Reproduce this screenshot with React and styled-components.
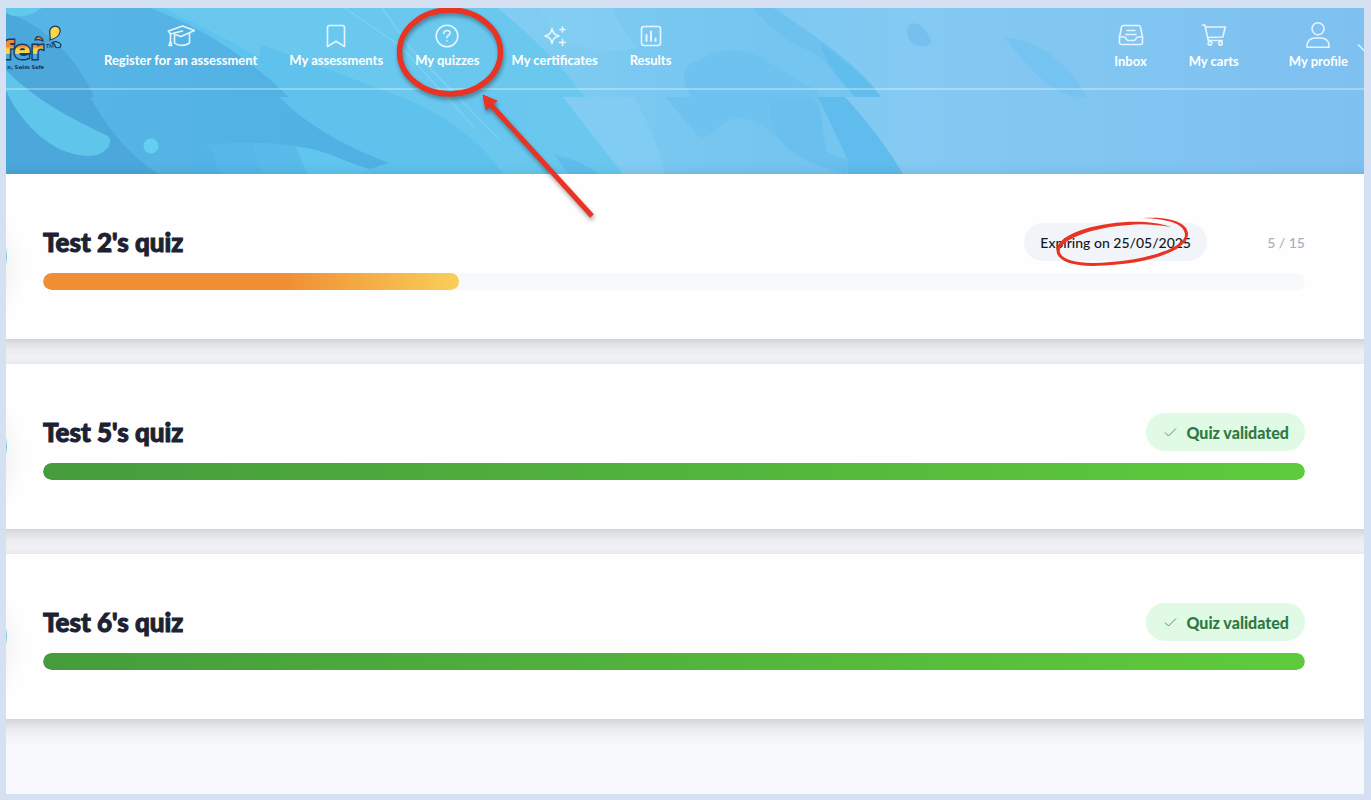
import React from "react";
import styled, { createGlobalStyle } from "styled-components";

const GlobalStyle = createGlobalStyle`
  * {
    box-sizing: border-box;
  }
  body {
    margin: 0;
    background: #d5e1f2;
    font-family: Lato, "Liberation Sans", sans-serif;
  }
`;

const Page = styled.div`
  min-height: 100vh;
  padding: 8px 7px 6px 6px;
  display: flex;
`;

const Window = styled.div`
  position: relative;
  flex: 1;
  min-width: 0;
  overflow: hidden;
  background: #f7f9fc;
`;

const Hero = styled.header`
  position: relative;
  padding-bottom: 84px;
  background: #84c9f3;
`;

const HeroArt = styled.svg`
  position: absolute;
  inset: 0;
  width: 100%;
  height: 100%;
`;

const Nav = styled.nav`
  position: relative;
  display: flex;
  align-items: flex-start;
  height: 82px;
  border-bottom: 2px solid rgba(255, 255, 255, 0.3);
`;

const Logo = styled.svg`
  width: 64px;
  height: 80px;
  margin-right: 34px;
`;

const NavLink = styled.a`
  display: flex;
  flex-direction: column;
  align-items: center;
  color: #fff;
  font-size: 13px;
  font-weight: 700;
  line-height: 18px;
  white-space: nowrap;
  text-decoration: none;
  & svg {
    width: 28px;
    height: 26px;
    fill: none;
    stroke: #e6f5fd;
    stroke-width: 1.6;
    stroke-linecap: round;
    stroke-linejoin: round;
  }
`;

const MainLinks = styled.div`
  display: flex;
  gap: 32px;
  padding-top: 15px;
  & ${NavLink} {
    gap: 2px;
  }
`;

const UserLinks = styled.div`
  display: flex;
  gap: 42px;
  padding-top: 14px;
  margin-left: auto;
  margin-right: 16px;
  & ${NavLink} {
    gap: 4px;
  }
  & ${NavLink}:last-child {
    margin-left: 8px;
  }
`;

const Chevron = styled.svg`
  position: absolute;
  right: -7px;
  top: 35px;
  width: 14px;
  height: 10px;
  fill: none;
  stroke: #e6f5fd;
  stroke-width: 1.5;
`;

const QuizList = styled.main`
  display: flex;
  flex-direction: column;
  gap: 25px;
  margin: 0 -40px;
`;

const Card = styled.section`
  position: relative;
  padding: 49px 99px 49px 77px;
  background: #fefefe;
  box-shadow: 0 8px 22px rgba(0, 0, 0, 0.12), 0 2px 10px rgba(0, 0, 0, 0.09);
`;

const Avatar = styled.span`
  position: absolute;
  left: -71px;
  top: 50%;
  width: 113px;
  height: 113px;
  margin-top: -57px;
  border: 1px solid #fff;
  border-radius: 50%;
  background: #7cc4d4;
  box-shadow: 0 10px 24px rgba(0, 0, 0, 0.08);
`;

const CardHead = styled.div`
  display: flex;
  align-items: center;
  height: 38px;
  margin-bottom: 12px;
`;

const Title = styled.h2`
  margin: 0 auto 0 0;
  color: #1b2231;
  font-size: 26px;
  font-weight: 900;
  line-height: 32px;
  -webkit-text-stroke: 1px currentColor;
`;

const Pill = styled.span`
  position: relative;
  display: flex;
  align-items: center;
  gap: 8px;
  height: 38px;
  padding: 0 16px;
  border-radius: 19px;
  font-size: ${({ $done }) => ($done ? 16 : 14)}px;
  white-space: nowrap;
  color: ${({ $done }) => ($done ? "#2f7a41" : "#14171c")};
  background: ${({ $done }) => ($done ? "#e1fae6" : "#f1f4f9")};
  font-weight: ${({ $done }) => ($done ? 900 : 500)};
`;

const Check = styled.svg`
  width: 16px;
  height: 16px;
  fill: none;
  stroke: #4f9a62;
  stroke-width: 1;
`;

const Count = styled.span`
  width: 98px;
  text-align: right;
  color: #a4b0c4;
  font-size: 14px;
  font-weight: 500;
`;

const Track = styled.div`
  height: 17px;
  border-radius: 9px;
  background: #f7f9fb;
  overflow: hidden;
`;

const Fill = styled.div`
  height: 100%;
  border-radius: 9px;
  background: ${({ $done }) =>
    $done
      ? "linear-gradient(90deg, #469c3c, #5ecb3c)"
      : "linear-gradient(90deg, #f08e35 58%, #f9cf58)"};
`;

const DateMark = styled.svg`
  position: absolute;
  right: 18px;
  top: -8px;
  width: 136px;
  height: 52px;
  fill: #e93323;
`;

const Pointer = styled.svg`
  position: absolute;
  left: 384px;
  top: -8px;
  width: 220px;
  height: 226px;
  pointer-events: none;
  filter: drop-shadow(1px 3px 2px rgba(0, 0, 0, 0.35));
`;

const icons = {
  cap: (
    <>
      <path d="M1.500 8 15.500 3l12 4.500L14 13.500 8 11.500" />
      <path d="M7.500 12v8c3.500 3.200 10.500 3.200 15 0v-9.500" />
      <path d="M15.500 8 3.500 11M1.500 8l2 3v7M3.500 18 2 22.500h2.800Z" />
    </>
  ),
  bookmark: <path d="M7.500 2.500h13a2 2 0 0 1 2 2V23.500L14 18.200 5.500 23.500V4.500a2 2 0 0 1 2-2Z" />,
  question: (
    <>
      <circle cx="14" cy="13" r="10.800" />
      <path d="M10.800 10.500c.2-4.200 6.600-3.800 6.300-.2-.2 2-3.200 2-3.200 4.400M13.900 17.800v.2" />
    </>
  ),
  sparkles: (
    <>
      <path d="M11 5.500c1 4.800 2.500 6.300 7 7.500-4.500 1.200-6 2.700-7 7.500-1-4.800-2.500-6.300-7-7.500 4.500-1.200 6-2.700 7-7.500Z" />
      <path d="M21.500 4v5M19 6.500h5M21.500 16.500v6M18.500 19.500h6" />
    </>
  ),
  chart: (
    <>
      <rect x="4.500" y="3.500" width="19" height="19" rx="2.500" />
      <path d="M9.500 12v6M14 8.500V18M18.500 15.500V18" strokeWidth="2" />
    </>
  ),
  inbox: (
    <>
      <path d="M6.500 3.500h15c1 0 1.700.6 2 1.600L25.500 15v5.500a2 2 0 0 1-2 2h-19a2 2 0 0 1-2-2V15L4.500 5.100c.3-1 1-1.600 2-1.600Z" />
      <path d="M2.500 15h5c1.500 0 1.500 3.500 3.500 3.500h6c2 0 2-3.500 3.500-3.500h5M10 8.500h8M9 12.500h10" />
    </>
  ),
  cart: (
    <>
      <path d="M2.500 3h2.300l3.500 15.500h14M5.300 5h20l-2.500 10-15.200.5" />
      <circle cx="10" cy="21.300" r="1.800" />
      <circle cx="20.500" cy="21.300" r="1.800" />
    </>
  ),
  user: (
    <>
      <circle cx="14" cy="6.800" r="6" />
      <path d="M3 25.200v-1.700c0-5 4-7.500 8-7.500h6c4 0 8 2.500 8 7.500v1.700Z" />
    </>
  ),
};

const mainLinks = [
  { icon: "cap", label: "Register for an assessment" },
  { icon: "bookmark", label: "My assessments" },
  { icon: "question", label: "My quizzes" },
  { icon: "sparkles", label: "My certificates" },
  { icon: "chart", label: "Results" },
];

const userLinks = [
  { icon: "inbox", label: "Inbox" },
  { icon: "cart", label: "My carts" },
  { icon: "user", label: "My profile" },
];

const quizzes = [
  { name: "Test 2's quiz", done: 5, total: 15, expires: "25/05/2025" },
  { name: "Test 5's quiz", done: 15, total: 15 },
  { name: "Test 6's quiz", done: 15, total: 15 },
];

function Waves() {
  return (
    <HeroArt viewBox="6 8 1358 166" preserveAspectRatio="none" aria-hidden="true">
      <defs>
        <linearGradient id="sky" x1="0" x2="1">
          <stop offset="0" stopColor="#5dc3ec" />
          <stop offset="0.3" stopColor="#60c3ef" />
          <stop offset="0.48" stopColor="#76c7f1" />
          <stop offset="0.66" stopColor="#84caf3" />
          <stop offset="1" stopColor="#7ec0f0" />
        </linearGradient>
        <linearGradient id="centre" gradientUnits="userSpaceOnUse" x1="497" y1="0" x2="760" y2="0">
          <stop offset="0.1" stopColor="#80ccf2" />
          <stop offset="1" stopColor="#74c5f0" />
        </linearGradient>
        <linearGradient id="deep" gradientUnits="userSpaceOnUse" x1="6" y1="0" x2="389" y2="0">
          <stop offset="0.2" stopColor="#56b5e5" />
          <stop offset="1" stopColor="#50b0e3" />
        </linearGradient>
      </defs>
      <rect x="6" y="8" width="1358" height="166" fill="url(#sky)" />
      {/* right leaf */}
      <path d="M410 8H773C825 42 863 70 881 97H845Q880 135 903 174H410Z" fill="url(#centre)" />
      <path d="M753 8H773C825 42 863 70 881 97H855C838 77 822 56 808 50C785 42 770 26 753 8Z" fill="#6cc1ef" />
      <path d="M820 43Q862 72 881 97H855C838 77 830 70 820 43Z" fill="#60bdec" />
      <path d="M818 97H845Q880 135 903 174H848V160Z" fill="#60bcec" />
      <path d="M691 97C678 77 685 62 700 60C722 45 752 48 770 63C793 78 805 85 818 90V97L827 152L848 160V174C815 166 797 160 782 144C765 120 735 110 720 126C705 142 699 138 695 132L665 97Z" fill="#6dc2ef" />
      <path d="M768 97H812C825 120 822 140 827 152L848 162L845 174C780 153 772 138 768 97Z" fill="#60baeb" opacity="0.35" />
      {/* centre leaf */}
      <path d="M163 8H497Q548 48 585 97H563L623 174H370Q400 120 163 8Z" fill="#6ac8ef" />
      <path d="M538 8H612C622 32 634 42 638 47C620 53 585 55 556 36Z" fill="#86cff4" opacity="0.6" />
      <path d="M563 97H634Q656 135 665 174H623Z" fill="#84cdf4" opacity="0.7" />
      <path d="M163 8Q290 55 402 97Q470 125 503 174H260V8Z" fill="#5ec2ed" />
      <path d="M163 8H345Q370 60 402 97Q290 55 163 8Z" fill="#6ac8ef" />
      <path d="M523 97C536 118 530 140 514 145C490 142 470 125 450 97Z" fill="#62c2ed" opacity="0.3" />
      <path d="M555 155Q582 160 598 174H568Z" fill="#58b8e9" opacity="0.6" />
      <path d="M345 8L400 46L475 128M382 8L410 48L500 140" fill="none" stroke="#9addf7" strokeWidth="1.500" opacity="0.4" />
      {/* left leaf */}
      <path d="M6 8H150Q226 36 289 97H279C310 128 350 148 389 163L370 169C345 163 325 148 285 145L252 143V174H6Z" fill="url(#deep)" />
      <path d="M252 143Q280 143 297 147L308 174H220L213 154Q210 148 204 145Q228 142 252 143Z" fill="#56b7e8" />
      <path d="M252 143Q280 143 297 147L308 174H262Z" fill="#59bbea" />
      <path d="M296 147C326 149 345 163 370 169L362 174H307Z" fill="#60c5ef" />
      <path d="M6 11C50 30 78 60 94 97H90Q118 148 158 174H6Z" fill="#4ca7da" />
      <path d="M6 8H42Q22 22 6 13Z" fill="#60c9ec" />
      <path d="M6 70C40 105 84 124 108 136C114 142 107 156 88 156C58 155 30 134 10 99L6 90Z" fill="#5fc5eb" />
      <circle cx="151" cy="146" r="7.500" fill="#64d0f1" />
      {/* loose drops */}
      <path d="M908 28C914 15 929 32 931 41C930 49 915 48 909 39Q906 32 908 28Z" fill="#76c0ef" />
      <path d="M1005 38C1042 40 1070 66 1086 97C1057 99 1033 74 1005 38Z" fill="#74c3f0" />
    </HeroArt>
  );
}

function Brand() {
  return (
    <Logo viewBox="6 8 64 80">
      <defs>
        <linearGradient id="sunset" x1="0" x2="0" y1="0" y2="1">
          <stop offset="0.36" stopColor="#ef8a33" />
          <stop offset="0.46" stopColor="#f9d648" />
          <stop offset="0.6" stopColor="#f9d648" />
          <stop offset="0.62" stopColor="#48a5dc" />
        </linearGradient>
      </defs>
      <text
        x="43"
        y="59"
        textAnchor="end"
        fontFamily="DejaVu Sans, sans-serif"
        fontSize="25"
        fontWeight="700"
        fill="url(#sunset)"
        stroke="#173a63"
        strokeWidth="3"
        paintOrder="stroke"
      >
        fer
      </text>
      <text
        x="44"
        y="69"
        textAnchor="end"
        fontFamily="DejaVu Sans, sans-serif"
        fontSize="5"
        fontWeight="700"
        fill="#12305a"
      >
        n, Swim Safe
      </text>
      <g stroke="#173a63" strokeWidth="1.200">
        <path d="M50 40C51 36 48 31 51 28C55 24 61 27 60 32C59 37 54 39 50 40Z" fill="#f9d648" />
        <path d="M35 40C36 35 42 36 43 41Q39 39 35 40Z" fill="#ef8a33" />
        <path d="M52 43C56 40 61 43 61 45.500C60 49 55 48 55 45.500C55 44 53 43 52 43Z" fill="#5db8e5" />
      </g>
      <text x="46" y="48" fontSize="5" fontWeight="700" fill="#173a63">TM</text>
    </Logo>
  );
}

function NavItem({ icon, label }) {
  return (
    <NavLink href="#">
      <svg viewBox="0 0 28 26" aria-hidden="true">{icons[icon]}</svg>
      {label}
    </NavLink>
  );
}

function QuizCard({ quiz }) {
  const done = quiz.done === quiz.total;
  const percent = Math.floor((quiz.done / quiz.total) * 100);
  return (
    <Card>
      <Avatar />
      <CardHead>
        <Title>{quiz.name}</Title>
        {done ? (
          <Pill $done>
            <Check viewBox="0 0 16 16" aria-hidden="true">
              <path d="M3 8.500 6.500 12 14 4.500" />
            </Check>
            Quiz validated
          </Pill>
        ) : (
          <>
            <Pill>
              Expiring on {quiz.expires}
              <DateMark viewBox="0 0 136 52" aria-hidden="true">
                <path d="M90 3C120 1 136 9 135 20C133 37 92 50 40 51C14 51 1 43 4 33C8 16 55 5 92 7Q107 8 118 12Q92 8 76 10C41 12 10 24 7 34C5 42 17 48 40 48C88 47 131 34 132 20C132 9 116 4 90 3Z" />
              </DateMark>
            </Pill>
            <Count>
              {quiz.done} / {quiz.total}
            </Count>
          </>
        )}
      </CardHead>
      <Track
        role="progressbar"
        aria-label={quiz.name}
        aria-valuenow={quiz.done}
        aria-valuemax={quiz.total}
      >
        <Fill $done={done} style={{ width: `${percent}%` }} />
      </Track>
    </Card>
  );
}

export default function App() {
  return (
    <>
      <GlobalStyle />
      <Page>
        <Window>
          <Hero>
            <Waves />
            <Nav>
              <Brand />
              <MainLinks>
                {mainLinks.map((link) => (
                  <NavItem key={link.label} {...link} />
                ))}
              </MainLinks>
              <UserLinks>
                {userLinks.map((link) => (
                  <NavItem key={link.label} {...link} />
                ))}
              </UserLinks>
              <Chevron viewBox="0 0 14 10">
                <path d="M1 1.500 7 7.500 13 1.500" />
              </Chevron>
            </Nav>
          </Hero>
          <QuizList>
            {quizzes.map((quiz) => (
              <QuizCard key={quiz.name} quiz={quiz} />
            ))}
          </QuizList>
          <Pointer viewBox="390 0 220 226" aria-hidden="true">
            <ellipse cx="450" cy="52" rx="50.500" ry="42" fill="none" stroke="#e93323" strokeWidth="5.500" />
            <path d="M592 216 491 105" stroke="#e93323" strokeWidth="5" />
            <path d="M483 95 497 101 486 110Z" fill="#e93323" stroke="#e93323" />
          </Pointer>
        </Window>
      </Page>
    </>
  );
}
